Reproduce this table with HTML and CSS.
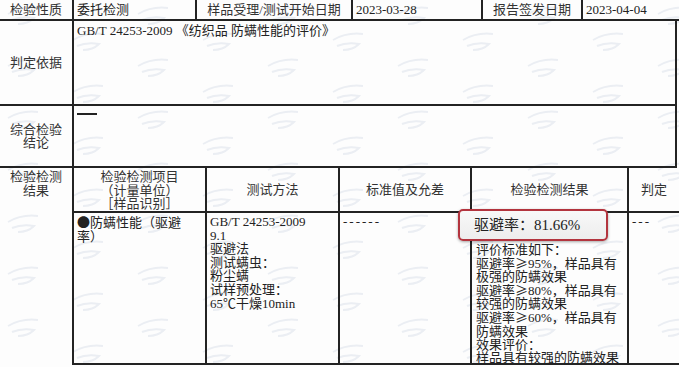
FILE: index.html
```html
<!DOCTYPE html>
<html lang="zh-CN">
<head>
<meta charset="utf-8">
<title>检验报告</title>
<link rel="stylesheet" href="styles.css">
</head>
<body>
<div class="sheet">
  <div class="top">
    <div class="c lbl">检验性质</div>
    <div class="c val">委托检测</div>
    <div class="c lbl">样品受理/测试开始日期</div>
    <div class="c val">2023-03-28</div>
    <div class="c lbl">报告签发日期</div>
    <div class="c val end">2023-04-04</div>
    <div class="c lbl">判定依据</div>
    <div class="c wide">GB/T 24253-2009 《纺织品 防螨性能的评价》</div>
    <div class="c lbl">综合检验<br>结论</div>
    <div class="c wide"><span class="dash"></span></div>
  </div>
  <div class="bottom">
    <div class="c side">检验检测<br>结果</div>
    <div class="c hd hd-top">检验检测项目<br>（计量单位）<br>［样品识别］</div>
    <div class="c hd">测试方法</div>
    <div class="c hd">标准值及允差</div>
    <div class="c hd">检验检测结果</div>
    <div class="c hd end">判定</div>
    <div class="c cell"><span class="cjk">●</span>防螨性能（驱避<br>率）</div>
    <div class="c cell">GB/T 24253-2009<br>9.1<br>驱避法<br>测试螨虫：<br>粉尘螨<br>试样预处理：<br>65℃干燥10min</div>
    <div class="c cell"><span class="dashes">------</span></div>
    <div class="c cell result">
      <div class="badge">驱避率：81.66%</div>
      <div class="result-text">评价标准如下：<br>驱避率<span class="cjk">≥</span>95%，样品具有<br>极强的防螨效果<br>驱避率<span class="cjk">≥</span>80%，样品具有<br>较强的防螨效果<br>驱避率<span class="cjk">≥</span>60%，样品具有<br>防螨效果<br>效果评价：<br>样品具有较强的防螨效果</div>
    </div>
    <div class="c cell end"><span class="dashes">---</span></div>
  </div>
</div>
</body>
</html>
```
FILE: styles.css
```css
* {
  box-sizing: border-box;
  margin: 0;
  padding: 0;
}

html, body {
  width: 679px;
  height: 367px;
  overflow: hidden;
}

body {
  background-color: #fdfdfd;
  background-image: url("data:image/svg+xml;utf8,<svg xmlns='http://www.w3.org/2000/svg' width='130' height='52'><g fill='none' stroke='%23ebeef3' stroke-width='2'><path d='M8 14 q14 -8 30 -6 M12 20 q10 -4 22 -2 q-6 6 -16 6'/><path d='M73 40 q14 -8 30 -6 M77 46 q10 -4 22 -2 q-6 6 -16 6'/></g></svg>");
  background-repeat: repeat;
  font-family: "Liberation Serif", "Noto Sans CJK SC", serif;
  font-size: 13px;
  line-height: 13.5px;
  color: #222;
}

.cjk {
  font-family: "Noto Sans CJK SC", sans-serif;
}

.sheet {
  width: 679px;
}

.top {
  display: grid;
  grid-template-columns: 74px 123px 156px 130px 100px 96px;
  grid-template-rows: 21px 85px 62px;
}

.bottom {
  display: grid;
  grid-template-columns: 74px 133px 133px 132px 157px 50px;
  grid-template-rows: 45px 152px;
}

.c {
  border-right: 2px solid #232323;
  border-bottom: 2px solid #232323;
}

.end {
  border-right: none;
}

.lbl {
  display: flex;
  align-items: center;
  justify-content: center;
  text-align: center;
  color: #333;
}

.val {
  display: flex;
  align-items: center;
  padding-left: 3px;
}

.wide {
  grid-column: 2 / 7;
  padding: 3px 3px;
  border-right: 2px solid #232323;
  margin-right: 2px;
}

.dash {
  display: block;
  width: 20px;
  height: 2px;
  background: #222;
  margin-top: 4px;
}

.side {
  grid-row: 1 / 3;
  border-bottom: none;
  text-align: center;
  padding-top: 2px;
  line-height: 14px;
  color: #333;
}

.hd {
  display: flex;
  align-items: center;
  justify-content: center;
  text-align: center;
  color: #333;
}

.hd-top {
  align-items: flex-start;
  padding-top: 2px;
}

.cell {
  padding: 2px 3px;
  line-height: 13.6px;
}

.dashes {
  letter-spacing: 2px;
}

.result {
  position: relative;
  padding: 30px 3px 0 4px;
  line-height: 13.1px;
}

.badge {
  position: absolute;
  left: -14px;
  top: -4px;
  width: 150px;
  height: 32px;
  border: 2px solid #b3343e;
  border-radius: 5px;
  background: linear-gradient(#f8f8f8, #ededed);
  box-shadow: 0 1px 3px rgba(0, 0, 0, 0.35);
  font-size: 15px;
  line-height: 28px;
  padding-left: 14px;
  color: #222;
}
```
